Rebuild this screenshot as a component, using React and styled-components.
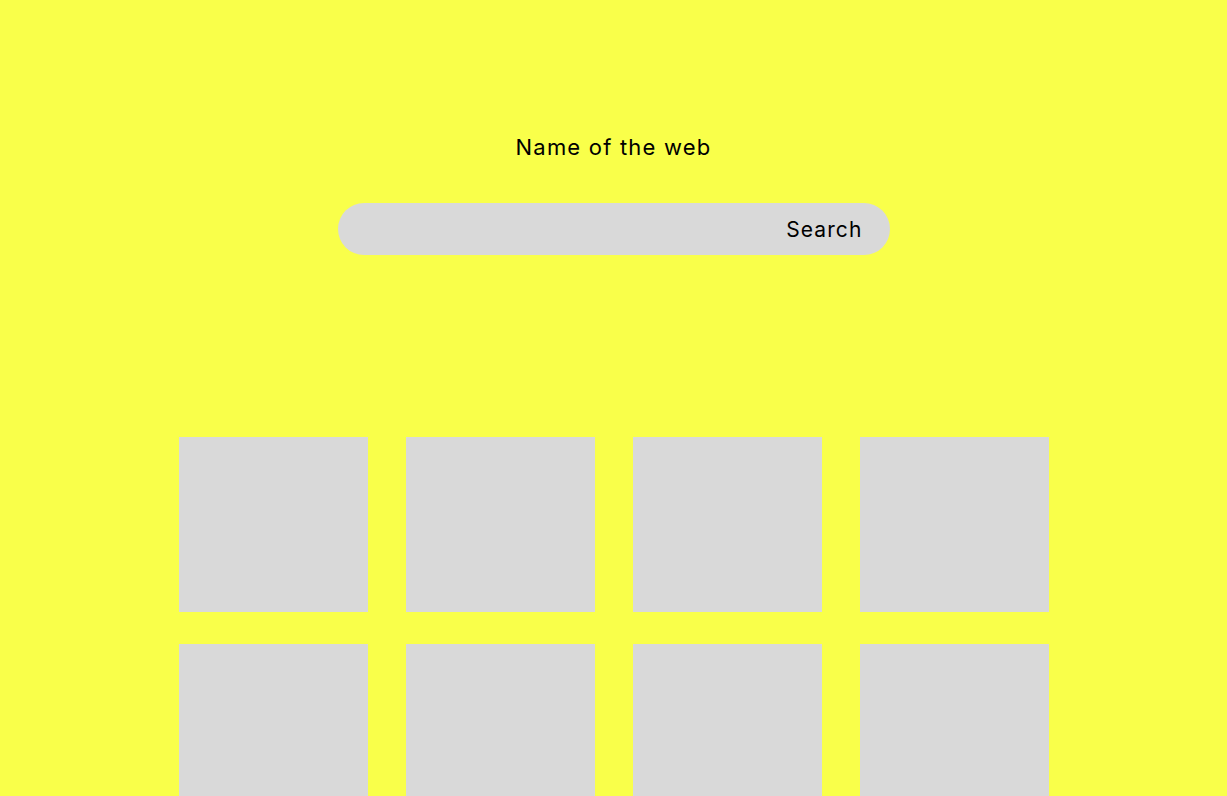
import React from 'react';
import styled, { createGlobalStyle } from 'styled-components';

const GlobalStyle = createGlobalStyle`
  body {
    margin: 0;
    background: #f9ff4a;
    font-family: Inter, "Liberation Sans", sans-serif;
  }
`;

const Page = styled.div`
  min-height: 100vh;
  display: flex;
  flex-direction: column;
  align-items: center;
  padding-top: 133px;
  box-sizing: border-box;
`;

const Title = styled.h1`
  margin: 0;
  font-size: 22px;
  font-weight: 400;
  letter-spacing: 1.2px;
  line-height: 28px;
  color: #000;
`;

const SearchBar = styled.div`
  margin-top: 42px;
  width: 552px;
  height: 52px;
  border-radius: 26px;
  background: #d9d9d9;
  display: flex;
  align-items: center;
  justify-content: flex-end;
  padding: 0 27px;
  box-sizing: border-box;
`;

const SearchInput = styled.input`
  flex: 1;
  border: none;
  background: transparent;
  outline: none;
  font: inherit;
  height: 100%;
`;

const SearchButton = styled.button`
  border: none;
  background: transparent;
  padding: 0;
  font-family: inherit;
  font-size: 21px;
  letter-spacing: 1.1px;
  color: #000;
  cursor: pointer;
`;

const Grid = styled.div`
  margin-top: 182px;
  display: grid;
  grid-template-columns: repeat(4, 189px);
  column-gap: 38px;
  row-gap: 32px;
`;

const Card = styled.div`
  height: 175px;
  background: #d9d9d9;
`;

const cards = Array.from({ length: 8 }, (_, i) => i);

export default function App() {
  return (
    <Page>
      <GlobalStyle />
      <Title>Name of the web</Title>
      <SearchBar>
        <SearchInput aria-label="search" />
        <SearchButton>Search</SearchButton>
      </SearchBar>
      <Grid>
        {cards.map(i => <Card key={i} />)}
      </Grid>
    </Page>
  );
}
